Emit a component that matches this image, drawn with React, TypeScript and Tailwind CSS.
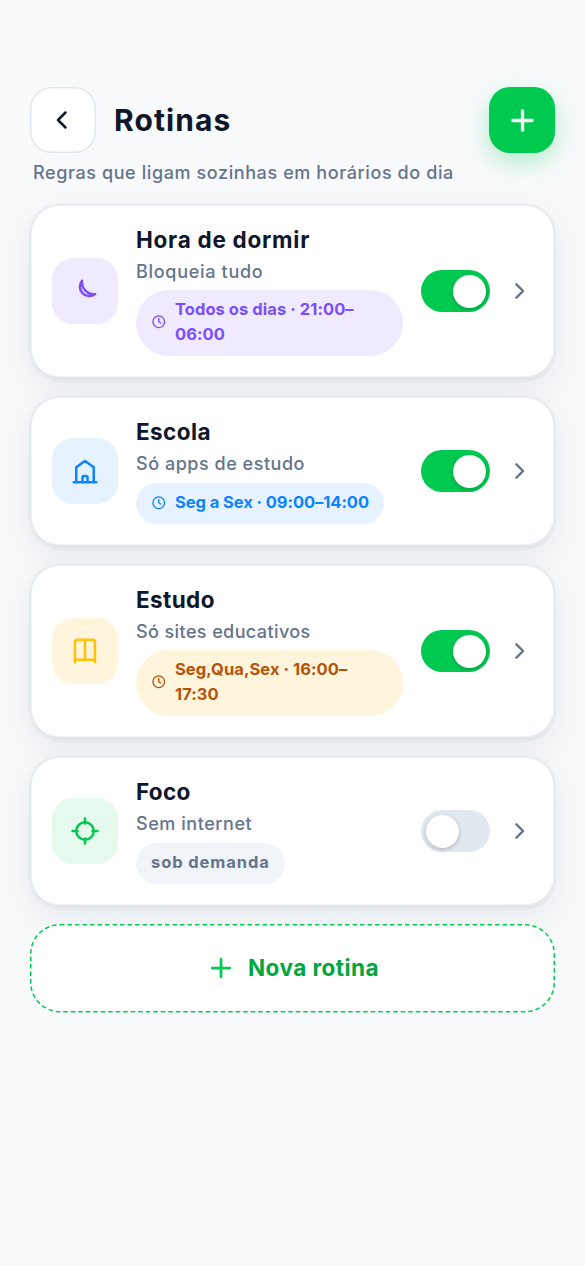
import { useState } from "react"
import type { ReactNode } from "react"

type Routine = {
  name: string
  nameClass: string
  detail: string
  detailClass: string
  schedule: string
  scheduleClass: string
  hasClock: boolean
  pillClass: string
  tileClass: string
  active: boolean
  icon: ReactNode
}

const routines: Routine[] = [
  {
    name: "Hora de dormir",
    nameClass: "tracking-[0.73px]",
    detail: "Bloqueia tudo",
    detailClass: "tracking-[0.7px]",
    schedule: "Todos os dias · 21:00–06:00",
    scheduleClass: "tracking-[0.06px]",
    hasClock: true,
    pillClass: "mt-[4.5px] pb-[8.75px] bg-[#f0eaff] text-[#7c4dff]",
    tileClass: "bg-[#f0eaff] text-[#7c4dff]",
    active: true,
    icon: <path d="M9.6 3.8A7.55 7.55 0 0 0 20.1 14.5 9.7 9.7 0 0 1 9.6 3.8z" />,
  },
  {
    name: "Escola",
    nameClass: "tracking-[0.4px]",
    detail: "Só apps de estudo",
    detailClass: "tracking-[0.53px]",
    schedule: "Seg a Sex · 09:00–14:00",
    scheduleClass: "tracking-[-0.07px]",
    hasClock: true,
    pillClass: "mt-[6px] pb-[8.25px] bg-[#e7f2ff] text-[#0a84ff]",
    tileClass: "bg-[#e7f2ff] text-[#0a84ff]",
    active: true,
    icon: <path d="M3 21h18M5 21V9l7-5 7 5v12M10 21v-4a1 1 0 0 1 1-1h2a1 1 0 0 1 1 1v4" />,
  },
  {
    name: "Estudo",
    nameClass: "tracking-[0.4px]",
    detail: "Só sites educativos",
    detailClass: "tracking-[0.4px]",
    schedule: "Seg,Qua,Sex · 16:00–17:30",
    scheduleClass: "tracking-[0.06px]",
    hasClock: true,
    pillClass: "mt-[4.5px] pb-[8.75px] bg-[#fff5dc] text-[#b45309]",
    tileClass: "bg-[#fff5dc] text-[#ffc107]",
    active: true,
    icon: <path d="M4 21V5a2 2 0 0 1 2-2h12a2 2 0 0 1 2 2v16M4 19h16M12 3v16" />,
  },
  {
    name: "Foco",
    nameClass: "tracking-[0.3px]",
    detail: "Sem internet",
    detailClass: "tracking-[0.55px]",
    schedule: "sob demanda",
    scheduleClass: "tracking-[0.9px]",
    hasClock: false,
    pillClass: "mt-[6px] pb-[8.25px] bg-[#f1f5f9] text-[#64748b]",
    tileClass: "bg-[#e6f9ed] text-[#00c950]",
    active: false,
    icon: (
      <>
        <circle cx="12" cy="12" r="7" />
        <path d="M12 2v4M12 18v4M2 12h4M18 12h4" />
      </>
    ),
  },
]

function Icon({ size, stroke = 2, children }: { size: number; stroke?: number; children: ReactNode }) {
  return (
    <svg
      width={size}
      height={size}
      viewBox="0 0 24 24"
      fill="none"
      stroke="currentColor"
      strokeWidth={stroke}
      strokeLinecap="round"
      strokeLinejoin="round"
      className="shrink-0"
    >
      {children}
    </svg>
  )
}

function Toggle({ on, onChange }: { on: boolean; onChange: () => void }) {
  return (
    <button
      onClick={onChange}
      role="switch"
      aria-checked={on}
      className={`flex h-[42px] w-[69px] shrink-0 items-center rounded-full px-[4.5px] ${
        on ? "justify-end bg-[#00c950]" : "justify-start bg-[#e2e8f0]"
      }`}
    >
      <span className="size-[33px] rounded-full bg-white shadow-[0_1.5px_4px_rgba(15,23,42,0.25)]" />
    </button>
  )
}

function RoutineCard({ routine }: { routine: Routine }) {
  const [on, setOn] = useState(routine.active)

  return (
    <div className="flex items-center gap-[18px] rounded-[30px] bg-white py-[22.5px] pr-[23px] pl-[22px] shadow-[inset_0_0_0_1.5px_#e2e8f0,0_12px_36px_rgba(15,23,42,0.08),0_1.5px_4px_rgba(15,23,42,0.06)]">
      <div className={`flex size-[66px] shrink-0 items-center justify-center rounded-[21px] ${routine.tileClass}`}>
        <Icon size={30}>{routine.icon}</Icon>
      </div>

      <div className="flex min-w-0 flex-1 flex-col items-start">
        <h2 className={`text-[22.5px] leading-[25.5px] font-bold whitespace-nowrap text-[#0f172a] ${routine.nameClass}`}>
          {routine.name}
        </h2>
        <p className={`mt-[6px] text-[18px] leading-[27px] font-medium whitespace-nowrap text-[#64748b] ${routine.detailClass}`}>
          {routine.detail}
        </p>
        <div className={`flex items-center gap-[8.5px] rounded-[33px] px-[15px] pt-[7.25px] ${routine.pillClass}`}>
          {routine.hasClock && (
            <Icon size={15.5} stroke={2.1}>
              <circle cx="12" cy="12" r="9" />
              <path d="M12 7v5l3 2" />
            </Icon>
          )}
          <span className={`text-[16.5px] leading-[25px] font-bold ${routine.scheduleClass}`}>{routine.schedule}</span>
        </div>
      </div>

      <Toggle on={on} onChange={() => setOn(!on)} />

      <span className="text-[#64748b]">
        <Icon size={24} stroke={2.4}>
          <path d="M8.4 5.3l6.7 6.7-6.7 6.7" />
        </Icon>
      </span>
    </div>
  )
}

export default function App() {
  return (
    <main className="min-h-[1266px] bg-[#f8fafc] px-[30px] pt-[87px] font-['Inter',sans-serif]">
      <header className="flex items-center gap-[18px]">
        <button
          aria-label="Voltar"
          className="flex size-[66px] items-center justify-center rounded-[21px] bg-white text-[#0f172a] shadow-[inset_0_0_0_1.5px_#e2e8f0]"
        >
          <Icon size={30}>
            <path d="M14 6l-6 6 6 6" />
          </Icon>
        </button>
        <h1 className="flex-1 text-[30px] leading-[45px] font-bold tracking-[1.1px] text-[#0f172a]">Rotinas</h1>
        <button
          aria-label="Adicionar"
          className="flex size-[66px] items-center justify-center rounded-[21px] bg-[#00c950] text-white shadow-[0_9px_24px_rgba(0,201,80,0.28)]"
        >
          <Icon size={33} stroke={2.4}>
            <path d="M12 5v14M5 12h14" />
          </Icon>
        </button>
      </header>

      <p className="mt-[6px] pl-[3px] text-[18px] leading-[27px] font-medium tracking-[0.6px] whitespace-nowrap text-[#64748b]">
        Regras que ligam sozinhas em horários do dia
      </p>

      <section className="mt-[18px] flex flex-col gap-[18px]">
        {routines.map((routine) => (
          <RoutineCard key={routine.name} routine={routine} />
        ))}

        <button className="relative flex h-[88.5px] items-center justify-center gap-[12px] rounded-[30px] bg-white pb-[1.5px]">
          {/* dashed outline, 1.5px thick */}
          <svg className="pointer-events-none absolute inset-0" width="525" height="88.5" fill="none">
            <rect x="0.75" y="0.75" width="523.5" height="87" rx="29.25" stroke="#00c950" strokeWidth="1.5" strokeDasharray="4.5 3" />
          </svg>
          <span className="text-[#00c950]">
            <Icon size={30} stroke={2.2}>
              <path d="M12 5v14M5 12h14" />
            </Icon>
          </span>
          <span className="text-[22.5px] leading-[34px] font-bold tracking-[0.45px] text-[#00a63e]">Nova rotina</span>
        </button>
      </section>
    </main>
  )
}
